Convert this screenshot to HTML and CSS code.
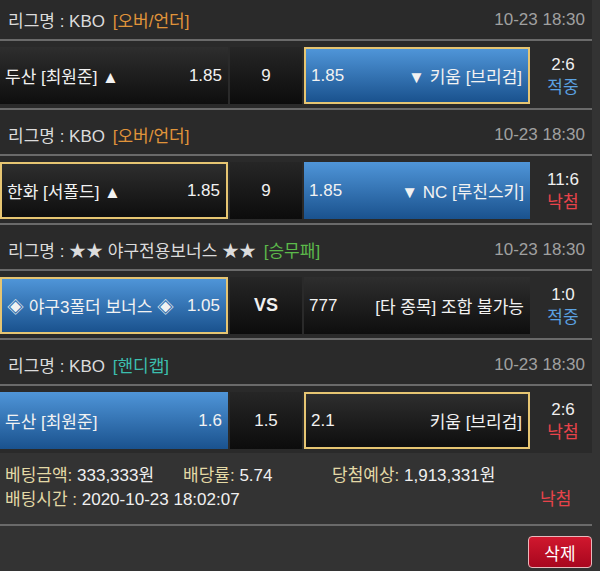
FILE: index.html
```html
<!DOCTYPE html>
<html lang="ko">
<head>
<meta charset="utf-8">
<link rel="stylesheet" href="styles.css">
</head>
<body>
<div class="list">
  <div class="game">
    <div class="ghead"><span class="league">리그명 : KBO <span class="tag orange">[오버/언더]</span></span><span class="date">10-23 18:30</span></div>
    <div class="grow">
      <div class="box dark"><span>두산 [최원준] ▲</span><span>1.85</span></div>
      <div class="mid">9</div>
      <div class="box blue sel"><span>1.85</span><span>▼ 키움 [브리검]</span></div>
      <div class="score"><span>2:6</span><span class="win">적중</span></div>
    </div>
  </div>
  <div class="game">
    <div class="ghead"><span class="league">리그명 : KBO <span class="tag orange">[오버/언더]</span></span><span class="date">10-23 18:30</span></div>
    <div class="grow">
      <div class="box dark sel"><span>한화 [서폴드] ▲</span><span>1.85</span></div>
      <div class="mid">9</div>
      <div class="box blue"><span>1.85</span><span>▼ NC [루친스키]</span></div>
      <div class="score"><span>11:6</span><span class="lose">낙첨</span></div>
    </div>
  </div>
  <div class="game">
    <div class="ghead"><span class="league">리그명 : ★★ 야구전용보너스 ★★ <span class="tag green">[승무패]</span></span><span class="date">10-23 18:30</span></div>
    <div class="grow">
      <div class="box blue sel"><span>◈ 야구3폴더 보너스 ◈</span><span>1.05</span></div>
      <div class="mid vs">VS</div>
      <div class="box dark"><span>777</span><span>[타 종목] 조합 불가능</span></div>
      <div class="score"><span>1:0</span><span class="win">적중</span></div>
    </div>
  </div>
  <div class="game last">
    <div class="ghead"><span class="league">리그명 : KBO <span class="tag teal">[핸디캡]</span></span><span class="date">10-23 18:30</span></div>
    <div class="grow">
      <div class="box blue"><span>두산 [최원준]</span><span>1.6</span></div>
      <div class="mid">1.5</div>
      <div class="box dark sel"><span>2.1</span><span>키움 [브리검]</span></div>
      <div class="score"><span>2:6</span><span class="lose">낙첨</span></div>
    </div>
  </div>
</div>
<div class="summary">
  <div class="sline">
    <span class="c1"><span class="lbl">베팅금액:</span> 333,333원</span>
    <span class="c2"><span class="lbl">배당률:</span> 5.74</span>
    <span class="c3"><span class="lbl">당첨예상:</span> 1,913,331원</span>
  </div>
  <div class="sline">
    <span class="c12"><span class="lbl">배팅시간 :</span> 2020-10-23 18:02:07</span>
    <span class="result lose">낙첨</span>
  </div>
</div>
<div class="actions">
  <button class="del">삭제</button>
</div>
</body>
</html>
```

FILE: styles.css
```css
html, body {
  margin: 0;
  padding: 0;
}
body {
  width: 600px;
  height: 571px;
  overflow: hidden;
  background: #333333;
  font-family: "Liberation Sans", "Noto Sans CJK KR", sans-serif;
  font-size: 17px;
  color: #e6e6e6;
}
.list {
  width: 592px;
  margin-top: -5px;
  background: #2a2a2a;
}
.game {
  border-bottom: 2px solid #6a6a6a;
}
.game.last {
  border-bottom: none;
}
.ghead {
  height: 46px;
  border-bottom: 2px solid #6a6a6a;
  display: flex;
  align-items: center;
  justify-content: space-between;
  padding: 5px 7px 0 8px;
  box-sizing: border-box;
}
.league {
  color: #dcdcdc;
}
.tag {
  margin-left: 3px;
}
.orange { color: #e0943a; }
.green { color: #5cb94a; }
.teal { color: #3cbfae; }
.date {
  color: #a0a0a0;
}
.grow {
  display: grid;
  grid-template-columns: 228px 72px 226px 62px;
  column-gap: 2px;
  padding: 6px 0 4px 0;
  height: 57px;
}
.box {
  display: flex;
  align-items: center;
  justify-content: space-between;
  padding: 0 6px 0 5px;
  box-sizing: border-box;
  height: 57px;
  color: #f2f2f2;
}
.dark {
  background: linear-gradient(#2e2e2e, #0e0e0e);
}
.blue {
  background: linear-gradient(#4f95d8, #1a528e);
}
.sel {
  border: 2px solid #e6c572;
}
.mid {
  display: flex;
  align-items: center;
  justify-content: center;
  height: 57px;
  background: linear-gradient(#262626, #0c0c0c);
  color: #f0f0f0;
}
.mid.vs {
  font-weight: bold;
  font-size: 18px;
}
.score {
  display: flex;
  flex-direction: column;
  align-items: center;
  justify-content: center;
  line-height: 23px;
  color: #f0f0f0;
}
.win { color: #5ba2e2; }
.lose { color: #e8434a; }
.summary {
  width: 592px;
  padding: 8px 0 15px 5px;
  box-sizing: border-box;
  border-bottom: 2px solid #6a6a6a;
}
.sline {
  display: flex;
  height: 24px;
  align-items: center;
  color: #f0f0f0;
}
.lbl {
  color: #e3d9a6;
}
.c1 { width: 178px; }
.c2 { width: 149px; }
.c12 { width: 535px; }
.actions {
  width: 592px;
  display: flex;
  justify-content: flex-end;
  padding-top: 10px;
}
.del {
  width: 64px;
  height: 32px;
  border: 1px solid #e8b8bc;
  border-radius: 4px;
  background: linear-gradient(#d0182e, #a8061e);
  color: #ffffff;
  font-family: "Liberation Sans", "Noto Sans CJK KR", sans-serif;
  font-size: 17px;
  padding: 0;
}
```
